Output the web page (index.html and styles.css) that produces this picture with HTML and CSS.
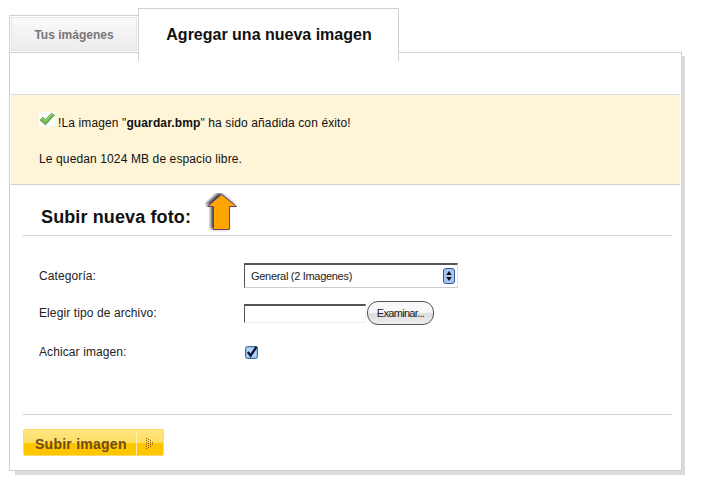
FILE: index.html
```html
<!DOCTYPE html>
<html lang="es">
<head>
<meta charset="utf-8">
<title>Agregar una nueva imagen</title>
<link rel="stylesheet" href="styles.css">
</head>
<body>
<div class="page">
  <nav class="tabs">
    <a class="tab tab-idle"><span class="tab-idle-inner">Tus imágenes</span></a>
    <a class="tab tab-active">Agregar una nueva imagen</a>
  </nav>
  <main class="panel">
    <section class="notice">
      <p class="notice-line"><svg class="check" width="16" height="14" viewBox="0 0 16 14"><rect width="16" height="14" fill="#fff"/><path d="M1 8 L4 5 L6.5 7.5 L12.5 1 L15.5 3 L6.5 13 Z" fill="#6cb552" stroke="#4f9a3d" stroke-width=".7"/><path d="M2.5 7.5 L4 6.3 L6.5 9 L12.8 2.2 L14 3" fill="none" stroke="#a9dd8e" stroke-width="1"/></svg>!La imagen "<b>guardar.bmp</b>" ha sido añadida con éxito!</p>
      <p class="notice-line notice-free">Le quedan 1024 MB de espacio libre.</p>
    </section>
    <header class="heading">
      <h1 class="heading-title">Subir nueva foto:</h1>
      <svg class="arrow" width="36" height="42" viewBox="0 0 36 42"><defs><filter id="blur" x="-30%" y="-30%" width="160%" height="160%"><feGaussianBlur stdDeviation="1.5"/></filter></defs><path d="M0 12 L14 -1 L30 12 L23 12 L23 36 L6 36 L6 12 Z" fill="#111" filter="url(#blur)" opacity=".8"/><path d="M2.5 13.5 L16.5 1.5 L31.5 13.5 L24.5 13.5 L24.5 36.5 L8.5 36.5 L8.5 13.5 Z" fill="#ffa500" stroke="#6a3d7c" stroke-width="1"/></svg>
    </header>
    <form class="form">
      <div class="row row-select">
        <label class="label">Categoría:</label>
        <div class="select"><span>General (2 Imagenes)</span>
          <svg class="spin" width="12" height="16" viewBox="0 0 12 16"><rect x=".5" y=".5" width="11" height="15" rx="2.5" fill="#a9c6ee" stroke="#33539a"/><path d="M6 3 L8.8 7 H3.2 Z M6 13 L3.2 9 H8.8 Z" fill="#111"/></svg>
        </div>
      </div>
      <div class="row row-file">
        <label class="label">Elegir tipo de archivo:</label>
        <div class="file"><span class="file-input"></span><button type="button" class="browse">Examinar...</button></div>
      </div>
      <div class="row row-check">
        <label class="label">Achicar imagen:</label>
        <svg class="checkbox" width="13" height="13" viewBox="0 0 13 13"><rect x=".5" y=".5" width="12" height="12" rx="2" fill="#8fbce8" stroke="#3f6a9c"/><rect x="2" y="2" width="9" height="9" fill="#b5d3f2"/><path d="M2.8 6 L5.6 9.6 L11.6 .6" fill="none" stroke="#0c1840" stroke-width="2.4"/></svg>
      </div>
    </form>
    <footer class="footer">
      <button type="button" class="submit"><span class="submit-label">Subir imagen</span><span class="submit-arrow"><svg width="9" height="11" viewBox="0 0 9 11"><g fill="#8a5a10"><rect x="0" y="0" width="1" height="1"/><rect x="0" y="2" width="1" height="1"/><rect x="0" y="4" width="1" height="1"/><rect x="0" y="6" width="1" height="1"/><rect x="0" y="8" width="1" height="1"/><rect x="0" y="10" width="1" height="1"/><rect x="2" y="1" width="1" height="1"/><rect x="2" y="3" width="1" height="1"/><rect x="2" y="5" width="1" height="1"/><rect x="2" y="7" width="1" height="1"/><rect x="2" y="9" width="1" height="1"/><rect x="4" y="2" width="1" height="1"/><rect x="4" y="4" width="1" height="1"/><rect x="4" y="6" width="1" height="1"/><rect x="4" y="8" width="1" height="1"/><rect x="6" y="4" width="1" height="1"/><rect x="6" y="6" width="1" height="1"/></g></svg></span></button>
    </footer>
  </main>
</div>
</body>
</html>
```
FILE: styles.css
```css
* { box-sizing: border-box; }
html, body { margin: 0; padding: 0; background: #fff; }
body { font-family: "Liberation Sans", Arial, sans-serif; font-size: 12px; color: #111; }
.page { position: relative; z-index: 0; width: 702px; height: 493px; padding: 8px 0 0 9px; overflow: hidden; }

.tabs { display: flex; align-items: flex-start; height: 44px; position: relative; z-index: 1; }
.tab { display: block; }
.tab-idle { width: 129px; height: 37px; margin-top: 7px; padding: 1px 1px 0; border: 1px solid #d0d0d0; border-bottom: 0; border-right: 0; background: #fff; }
.tab-idle-inner { display: block; height: 34px; background: linear-gradient(#fafafa, #ececec); border: 1px solid #e4e4e4; color: #777; font-weight: bold; line-height: 34px; text-align: center; }
.tab-active { width: 261px; height: 53px; padding: 15px 0 0 1px; border: 1px solid #d0d0d0; border-bottom: 0; background: #fff; color: #111; font-size: 16px; font-weight: bold; line-height: 22px; text-align: center; }

.panel { position: relative; width: 673px; height: 419px; padding: 41px 1px 0; border: 1px solid #d0d0d0; background: #fff; display: flex; flex-direction: column; }
.panel::before { content: ""; position: absolute; z-index: -1; left: 5px; top: 3px; right: -4px; bottom: -5px; background: #dcdcdc; }

.notice { height: 91px; padding: 17px 28px 0; background: #fef4d7; border-top: 1px solid #dcdcdc; border-bottom: 1px solid #d0d0d0; letter-spacing: .12px; }
.notice-line { margin: 0; height: 16px; line-height: 16px; }
.notice-free { margin-top: 23px; }
.check { vertical-align: 1px; margin-right: 3px; }

.heading { margin: 0 8px 0 12px; height: 51px; padding-left: 18px; border-bottom: 1px solid #d0d0d0; display: flex; align-items: flex-start; }
.heading-title { margin: 21px 0 0; font-size: 18px; line-height: 22px; font-weight: bold; letter-spacing: .12px; color: #111; }
.arrow { margin: 8px 0 0 14px; flex: none; }

.form { padding: 0 0 0 28px; flex: none; height: 178px; letter-spacing: .1px; }
.row { display: flex; align-items: center; }
.label { width: 205px; flex: none; color: #222; }
.row-select { height: 25px; margin-top: 27px; }
.row-file { height: 24px; margin-top: 13px; }
.row-check { height: 14px; margin-top: 20px; }

.select { position: relative; width: 214px; height: 25px; padding-left: 6px; line-height: 23px; font-size: 11px; letter-spacing: -.3px; color: #222; border: 2px solid #555; border-right: 1px solid #ddd; border-bottom: 1px solid #ccc; border-left-width: 1px; background: #fff; }
.spin { position: absolute; top: 3px; right: 2px; }

.file { display: flex; align-items: center; }
.file-input { display: block; width: 122px; height: 19px; border: 2px solid #555; border-right: 1px solid #eee; border-bottom: 1px solid #eee; border-left-width: 1px; background: #fff; }
.browse { width: 67px; height: 24px; margin: 0 0 0 1px; padding: 0; border: 1px solid #555; border-radius: 11px; background: linear-gradient(#f8f8f8 45%, #dcdcdc 55%, #eee); font: 11px "Liberation Sans", Arial, sans-serif; letter-spacing: -.7px; color: #222; }
.checkbox { margin-left: 1px; }

.footer { margin: 0 8px 0 12px; padding-top: 14px; border-top: 1px solid #d0d0d0; }
.submit { display: flex; width: 141px; height: 27px; padding: 0; border: 1px solid #ffdc68; border-radius: 2px; background: linear-gradient(#ffe680, #fedd65 50%, #ffc600 50%, #ffc600); }
.submit-label { display: block; width: 113px; height: 25px; padding-left: 11px; text-align: left; border-right: 1px solid #fff0a8; font: bold 14px/28px "Liberation Sans", Arial, sans-serif; letter-spacing: .25px; color: #6e4c18; }
.submit-arrow { display: flex; flex: 1; align-items: center; justify-content: center; padding-top: 1px; }
```
